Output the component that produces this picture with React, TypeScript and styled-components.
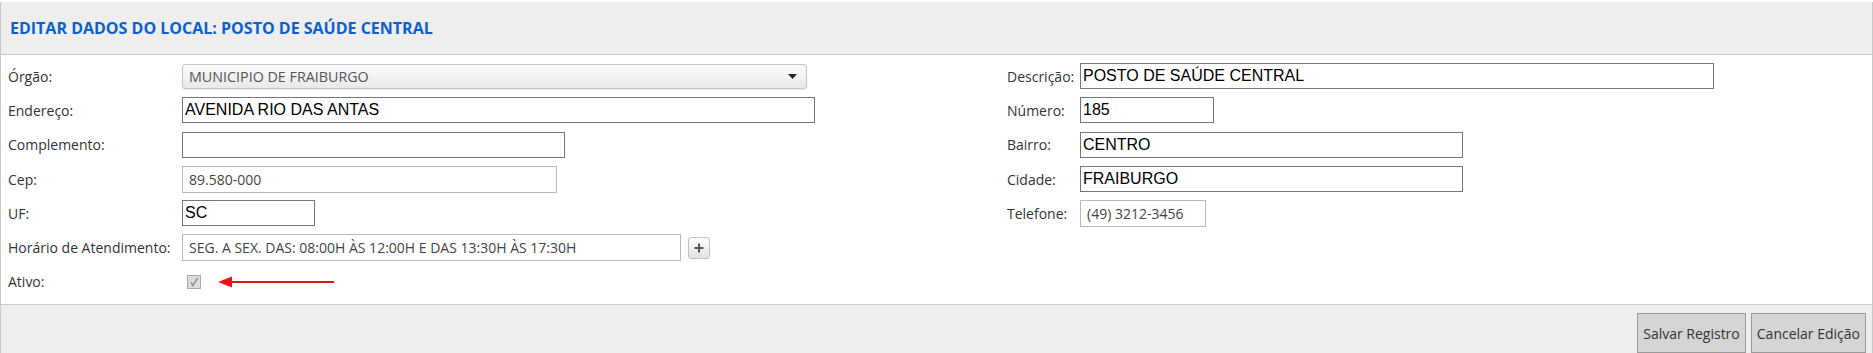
import React from "react";
import styled, { createGlobalStyle } from "styled-components";

const GlobalStyle = createGlobalStyle`
  html, body {
    margin: 0;
    padding: 0;
    overflow: hidden;
    background: #ffffff;
    font-family: "Open Sans", "Noto Sans", sans-serif;
  }
  * { box-sizing: border-box; }
`;

const Panel = styled.div`
  margin-top: 2px;
  border-left: 1px solid #c9c9c9;
  border-right: 1px solid #c9c9c9;
  background: #fff;
`;

const Header = styled.div`
  height: 53px;
  background: #eeeeee;
  border-bottom: 1px solid #c8c8c8;
  display: flex;
  align-items: center;
  padding-left: 9px;
`;

const Title = styled.h2`
  margin: 0;
  font-family: "Open Sans", sans-serif;
  font-weight: 700;
  font-size: 16px;
  color: #0a60cc;
`;

const Form = styled.div`
  padding: 4px 0 5px 7px;
`;

const Row = styled.div`
  display: grid;
  grid-template-columns: 174px 825px 73px 1fr;
  height: 34.3px;
  align-items: center;
`;

const Label = styled.label`
  font-size: 14px;
  color: #333;
  white-space: nowrap;
`;

const Cell = styled.div`
  display: flex;
  align-items: center;
`;

const TextInput = styled.div<{ $w: number }>`
  width: ${(p) => p.$w}px;
  height: 26px;
  border: 1px solid #767676;
  background: #fff;
  font-family: "Liberation Sans", Arial, sans-serif;
  font-size: 16px;
  color: #000;
  padding: 0 2px;
  display: flex;
  align-items: center;
  white-space: nowrap;
`;

const SoftInput = styled.div<{ $w: number }>`
  width: ${(p) => p.$w}px;
  height: 27px;
  border: 1px solid #b9b9b9;
  background: #fff;
  font-size: 14px;
  color: #444;
  padding: 0 6px;
  display: flex;
  align-items: center;
  white-space: nowrap;
  overflow: hidden;
`;

const SelectBox = styled.div`
  width: 625px;
  height: 25px;
  border: 1px solid #c4c4c4;
  border-radius: 3px;
  background: linear-gradient(#fbfbfb, #e9e9e9);
  box-shadow: 0 1px 1px rgba(0, 0, 0, 0.08);
  display: flex;
  align-items: center;
  justify-content: space-between;
  padding: 0 9px 0 6px;
  font-size: 14.3px;
  color: #555;
`;

const PlusButton = styled.div`
  margin-left: 7px;
  width: 22px;
  height: 22px;
  border: 1px solid #c2c2c2;
  border-radius: 3px;
  background: linear-gradient(#fdfdfd, #e4e4e4);
  display: flex;
  align-items: center;
  justify-content: center;
`;

const CheckBox = styled.span`
  margin-left: 5px;
  width: 14px;
  height: 14px;
  border: 1px solid #a9a9a9;
  background: #dcdcdc;
  display: flex;
  align-items: center;
  justify-content: center;
`;

const Pointer = styled.svg`
  margin-left: 17px;
`;

const Footer = styled.div`
  border-top: 1px solid #c8c8c8;
  background: #eeeeee;
  display: flex;
  justify-content: flex-end;
  gap: 5px;
  padding: 8px 6px 0 0;
  height: 60px;
`;

const ActionButton = styled.button`
  height: 40px;
  padding: 0 5px;
  border: 1px solid #9a9a9a;
  background: #d5d5d5;
  font-family: "Open Sans", sans-serif;
  font-size: 14px;
  color: #333;
  cursor: pointer;
`;

const Caret = () => (
  <svg width="9" height="5" viewBox="0 0 9 5">
    <polygon points="0,0 9,0 4.5,5" fill="#222" />
  </svg>
);

export default function App() {
  return (
    <>
      <GlobalStyle />
      <Panel>
        <Header>
          <Title>EDITAR DADOS DO LOCAL: POSTO DE SAÚDE CENTRAL</Title>
        </Header>
        <Form>
          <Row>
            <Label>Órgão:</Label>
            <Cell>
              <SelectBox>
                <span>MUNICIPIO DE FRAIBURGO</span>
                <Caret />
              </SelectBox>
            </Cell>
            <Label>Descrição:</Label>
            <Cell>
              <TextInput $w={634}>POSTO DE SAÚDE CENTRAL</TextInput>
            </Cell>
          </Row>
          <Row>
            <Label>Endereço:</Label>
            <Cell>
              <TextInput $w={633}>AVENIDA RIO DAS ANTAS</TextInput>
            </Cell>
            <Label>Número:</Label>
            <Cell>
              <TextInput $w={134}>185</TextInput>
            </Cell>
          </Row>
          <Row>
            <Label>Complemento:</Label>
            <Cell>
              <TextInput $w={383} />
            </Cell>
            <Label>Bairro:</Label>
            <Cell>
              <TextInput $w={383}>CENTRO</TextInput>
            </Cell>
          </Row>
          <Row>
            <Label>Cep:</Label>
            <Cell>
              <SoftInput $w={375}>89.580-000</SoftInput>
            </Cell>
            <Label>Cidade:</Label>
            <Cell>
              <TextInput $w={383}>FRAIBURGO</TextInput>
            </Cell>
          </Row>
          <Row>
            <Label>UF:</Label>
            <Cell>
              <TextInput $w={133}>SC</TextInput>
            </Cell>
            <Label>Telefone:</Label>
            <Cell>
              <SoftInput $w={126}>(49) 3212-3456</SoftInput>
            </Cell>
          </Row>
          <Row>
            <Label>Horário de Atendimento:</Label>
            <Cell>
              <SoftInput $w={499}>SEG. A SEX. DAS: 08:00H ÀS 12:00H E DAS 13:30H ÀS 17:30H</SoftInput>
              <PlusButton>
                <svg width="10" height="10" viewBox="0 0 10 10">
                  <rect x="4" y="0.5" width="2" height="9" fill="#555" />
                  <rect x="0.5" y="4" width="9" height="2" fill="#555" />
                </svg>
              </PlusButton>
            </Cell>
            <span />
            <span />
          </Row>
          <Row>
            <Label>Ativo:</Label>
            <Cell>
              <CheckBox>
                <svg width="10" height="10" viewBox="0 0 10 10">
                  <path d="M2 5.5 L4 8.5 L8.5 1" stroke="#8a8a8a" strokeWidth="1.4" fill="none" />
                </svg>
              </CheckBox>
              <Pointer width="116" height="12" viewBox="0 0 116 12">
                <line x1="11" y1="6" x2="116" y2="6" stroke="#e8141a" strokeWidth="2" />
                <polygon points="0,6 14,0.5 14,11.5" fill="#e8141a" />
              </Pointer>
            </Cell>
            <span />
            <span />
          </Row>
        </Form>
        <Footer>
          <ActionButton>Salvar Registro</ActionButton>
          <ActionButton>Cancelar Edição</ActionButton>
        </Footer>
      </Panel>
    </>
  );
}
